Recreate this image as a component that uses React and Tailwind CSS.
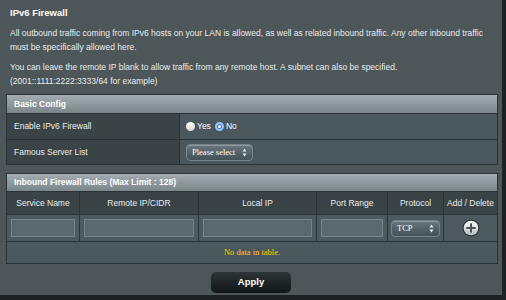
import React from 'react'

const cols = ['Service Name', 'Remote IP/CIDR', 'Local IP', 'Port Range', 'Protocol', 'Add / Delete']

function Arrows() {
  return (
    <svg width="5" height="9" viewBox="0 0 5 9" className="shrink-0">
      <path d="M2.5 0.5 L4.5 3.5 L0.5 3.5 Z" fill="#e8e8e8" />
      <path d="M2.5 8.5 L4.5 5.5 L0.5 5.5 Z" fill="#e8e8e8" />
    </svg>
  )
}

function FakeSelect({ label, className }) {
  return (
    <div
      className={`flex items-center justify-between rounded-[4px] border border-[#76838a] bg-gradient-to-b from-[#6b787d] via-[#55626a] to-[#46525a] pl-[5px] pr-[5px] shadow-[inset_0_1px_0_rgba(255,255,255,0.25)] ${className}`}
    >
      <span className="whitespace-nowrap font-['Liberation_Serif',serif] text-[8.5px] text-white">{label}</span>
      <Arrows />
    </div>
  )
}

function PlusIcon() {
  return (
    <svg width="18" height="18" viewBox="0 0 18 18">
      <defs>
        <linearGradient id="pg" x1="0" y1="0" x2="0" y2="1">
          <stop offset="0" stopColor="#ffffff" />
          <stop offset="1" stopColor="#b9bec1" />
        </linearGradient>
      </defs>
      <circle cx="9" cy="9" r="8.5" fill="#2f373a" />
      <circle cx="9" cy="9" r="7.3" fill="url(#pg)" />
      <rect x="8" y="4.3" width="2" height="9.4" fill="#4b5357" />
      <rect x="4.3" y="8" width="9.4" height="2" fill="#4b5357" />
    </svg>
  )
}

export default function App() {
  return (
    <div className="w-[506px] h-[300px] bg-[#1d2123] font-['Liberation_Sans',Arial,sans-serif] overflow-hidden">
      <div className="w-[502px] h-[295px] bg-[#4d5659] px-[6px] pt-[6px] text-[#e9ecec]">
        <div className="pl-[4px] text-[9.5px] font-bold leading-[14px] text-white">IPv6 Firewall</div>
        <p className="mt-[6px] pl-[4px] text-[8.5px] leading-[14px]">
          All outbound traffic coming from IPv6 hosts on your LAN is allowed, as well as related inbound traffic. Any other inbound traffic must be specifically allowed here.
        </p>
        <p className="mt-[7px] pl-[4px] text-[8.5px] leading-[13.5px]">
          You can leave the remote IP blank to allow traffic from any remote host. A subnet can also be specified.
          <br />
          (2001::1111:2222:3333/64 for example)
        </p>

        <div className="mt-[6px] w-[492px] border border-[#2b3336]">
          <div className="h-[18px] flex items-center pl-[7px] bg-gradient-to-b from-[#a3adb1] to-[#7b868a] text-[8.5px] font-bold text-white">
            Basic Config
          </div>
          <div className="flex h-[26px] border-t border-[#2b3336]">
            <div className="w-[173px] flex items-center pl-[7px] bg-[#3a4447] text-[8.5px] border-r border-[#2b3336]">
              Enable IPv6 Firewall
            </div>
            <div className="flex-1 flex items-center pl-[6px] bg-[#4a575c] text-[8.5px] text-white">
              <span className="w-[9px] h-[9px] rounded-full bg-gradient-to-b from-white to-[#d5d5d5]" />
              <span className="ml-[2px]">Yes</span>
              <span className="ml-[4px] w-[9px] h-[9px] rounded-full bg-[#2c7be5] border-[2px] border-[#9cc4f7] flex items-center justify-center">
                <span className="w-[3px] h-[3px] rounded-full bg-white" />
              </span>
              <span className="ml-[2px]">No</span>
            </div>
          </div>
          <div className="flex h-[25px] border-t border-[#2b3336]">
            <div className="w-[173px] flex items-center pl-[7px] bg-[#3a4447] text-[8.5px] border-r border-[#2b3336]">
              Famous Server List
            </div>
            <div className="flex-1 flex items-center pl-[6px] bg-[#4a575c]">
              <FakeSelect label="Please select" className="w-[67px] h-[17px]" />
            </div>
          </div>
        </div>

        <div className="mt-[8px] w-[492px] border border-[#2b3336]">
          <div className="h-[17px] flex items-center pl-[7px] bg-gradient-to-b from-[#a3adb1] to-[#7b868a] text-[8.5px] font-bold text-white">
            Inbound Firewall Rules (Max Limit : 128)
          </div>
          <div className="grid grid-cols-[73px_119px_118px_71px_56px_1fr] h-[23px] border-t border-[#2b3336] bg-[#3a4447]">
            {cols.map((c, i) => (
              <div
                key={c}
                className={`flex items-center justify-center text-[8.5px] ${i < 5 ? 'border-r border-[#2b3336]' : ''}`}
              >
                {c}
              </div>
            ))}
          </div>
          <div className="grid grid-cols-[73px_119px_118px_71px_56px_1fr] h-[27px] border-t border-[#2b3336] bg-[#4c595e]">
            {[0, 1, 2, 3].map((i) => (
              <div key={i} className="flex items-center px-[4px] border-r border-[#2b3336]">
                <div className="w-full h-[18px] bg-[#5b686d] border border-[#74828a]" />
              </div>
            ))}
            <div className="flex items-center px-[3px] border-r border-[#2b3336]">
              <FakeSelect label="TCP" className="w-full h-[17px]" />
            </div>
            <div className="flex items-center justify-center">
              <PlusIcon />
            </div>
          </div>
          <div className="h-[22px] flex items-center justify-center border-t border-[#2b3336] bg-[#4b585d] font-['Liberation_Serif',serif] text-[8.5px] text-[#ffcc00]">
            No data in table.
          </div>
        </div>

        <div className="mt-[8px] flex justify-center">
          <button className="w-[80px] h-[21px] rounded-[5px] bg-gradient-to-b from-[#2d3538] to-[#121617] text-[9.5px] font-bold text-white">
            Apply
          </button>
        </div>
      </div>
    </div>
  )
}
